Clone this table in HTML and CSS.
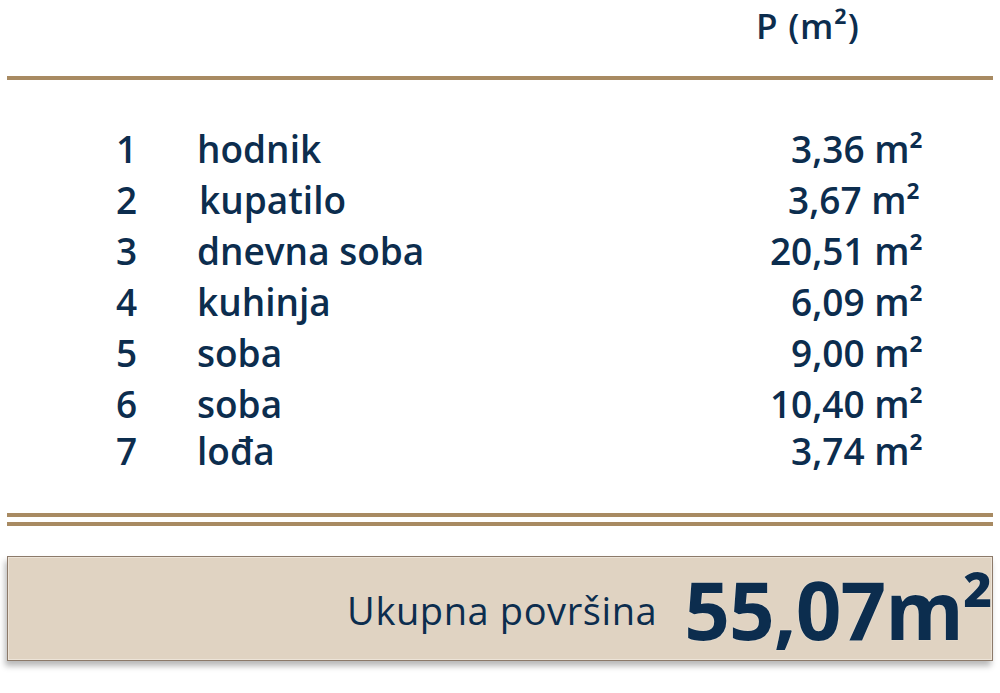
FILE: index.html
```html
<!DOCTYPE html>
<html lang="sr">
<head>
<meta charset="utf-8">
<title>Površina</title>
<link rel="stylesheet" href="styles.css">
</head>
<body>
<div class="page">
  <div class="header"><span class="header-title">P (m²)</span></div>
  <div class="rule"></div>
  <div class="rows">
    <div class="row"><span class="num">1</span><span class="name">hodnik</span><span class="val">3,36 m²</span></div>
    <div class="row"><span class="num">2</span><span class="name name-shift">kupatilo</span><span class="val val-shift">3,67 m²</span></div>
    <div class="row"><span class="num">3</span><span class="name">dnevna soba</span><span class="val">20,51 m²</span></div>
    <div class="row"><span class="num">4</span><span class="name">kuhinja</span><span class="val">6,09 m²</span></div>
    <div class="row"><span class="num">5</span><span class="name">soba</span><span class="val">9,00 m²</span></div>
    <div class="row"><span class="num">6</span><span class="name">soba</span><span class="val">10,40 m²</span></div>
    <div class="row row-tight"><span class="num">7</span><span class="name">lođa</span><span class="val">3,74 m²</span></div>
  </div>
  <div class="rule rule-a"></div>
  <div class="rule rule-b"></div>
  <div class="total">
    <span class="total-label">Ukupna površina</span>
    <span class="total-value">55,07m²</span>
  </div>
</div>
</body>
</html>
```

FILE: styles.css
```css
* { box-sizing: border-box; }
html, body { margin: 0; padding: 0; background: #ffffff; }
body {
  font-family: "Open Sans", "Noto Sans", sans-serif;
  color: #0c2d4e;
}
.page {
  width: 1000px;
  height: 693px;
  overflow: hidden;
}
.header {
  height: 76px;
  display: flex;
  justify-content: flex-start;
  padding-left: 756px;
}
.header-title {
  font-size: 35px;
  font-weight: 600;
  line-height: 52px;
  letter-spacing: 0.8px;
}
.rule {
  margin: 0 7px;
  height: 4px;
  background: #a88a62;
}
.rows {
  padding-top: 42px;
  padding-left: 116px;
  padding-right: 77px;
}
.row {
  display: grid;
  grid-template-columns: 81px 1fr auto;
  font-size: 37px;
  font-weight: 600;
  line-height: 46px;
  height: 51px;
  padding-top: 4px;
}
.row-tight { height: 47px; padding-top: 0; }
.name-shift { padding-left: 2px; }
.val { text-align: right; }
.val-shift { padding-right: 3px; }
.rule-a { margin-top: 38px; }
.rule-b { margin-top: 5px; }
.total {
  margin: 30px 7px 0;
  height: 105px;
  background: #e0d3c2;
  border: 1px solid #8c7a6a;
  box-shadow: inset 0 0 0 1px #ede4d8, -2px 5px 6px rgba(0,0,0,0.28);
  display: flex;
  justify-content: flex-end;
  align-items: center;
  padding-right: 0;
}
.total-label {
  font-size: 38px;
  font-weight: 500;
  line-height: 1;
  letter-spacing: 0.6px;
  margin-right: 27px;
  margin-top: 2px;
}
.total-value {
  font-size: 80px;
  font-weight: 700;
  line-height: 1;
  letter-spacing: -1px;
  text-shadow: 0 0 1px #f4ece0, 0 0 1px #f4ece0;
}
```
